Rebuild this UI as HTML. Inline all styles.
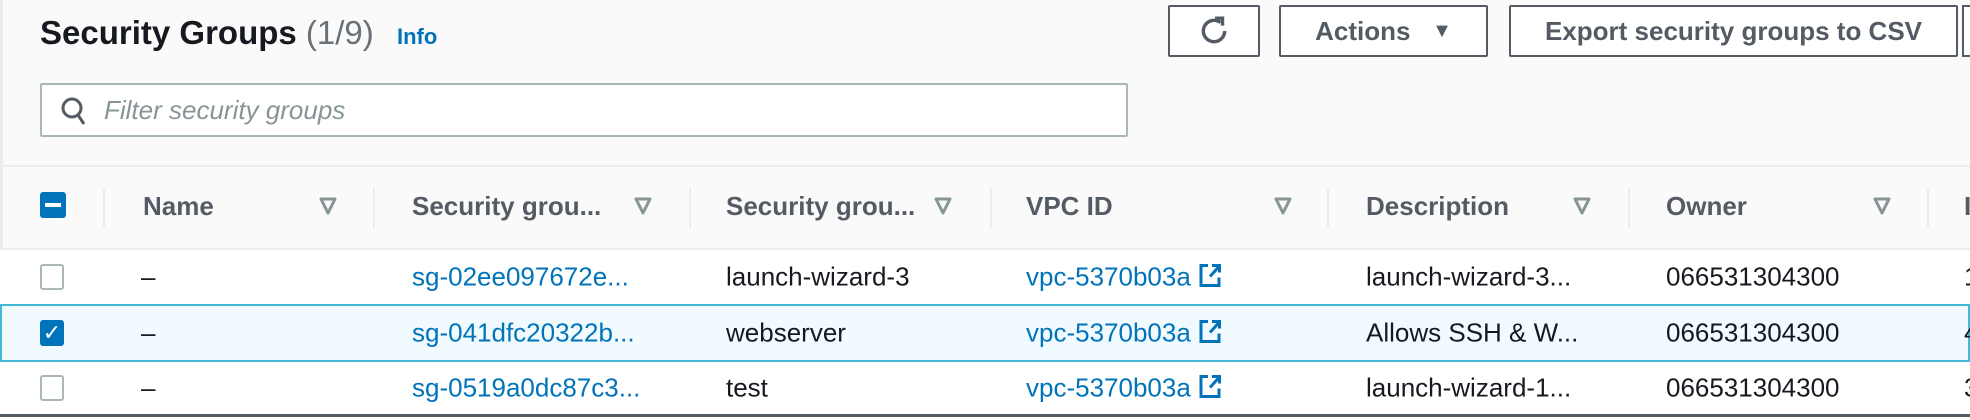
<!DOCTYPE html>
<html><head><style>
body{margin:0;width:1970px;height:420px;background:#fafafa;font-family:"Liberation Sans",sans-serif;position:relative;overflow:hidden;color:#16191f}
.a{position:absolute}
.btn{position:absolute;top:5px;height:52px;border:2px solid #545b64;border-radius:2px;background:#fff;box-sizing:border-box;font-weight:bold;font-size:26px;color:#545b64;display:flex;align-items:center;justify-content:center}
.hd{position:absolute;top:191px;font-weight:bold;font-size:26px;color:#545b64}
.div{position:absolute;top:188px;width:2px;height:40px;background:#eaeded}
.fi{position:absolute;top:197px}
.row{position:absolute;left:0;width:1970px;background:#fff;border-top:2px solid #eaeded;box-sizing:border-box}
.c{position:absolute;font-size:26px;top:50%;transform:translateY(-50%);white-space:nowrap}
.lk{color:#0073bb}
.cb{position:absolute;left:40px;width:24px;height:26px;border:2px solid #aab7b8;border-radius:3px;box-sizing:border-box;top:50%;transform:translateY(-50%);background:#fff}
</style></head><body>
<div class="a" style="left:0;top:0;width:3px;height:420px;background:#eaeded"></div>
<div class="a" style="left:40px;top:14px;font-size:33px;font-weight:bold">Security Groups <span style="font-weight:normal;color:#687078">(1/9)</span></div>
<div class="a" style="left:397px;top:24px;font-size:22px;font-weight:bold;color:#0073bb">Info</div>
<div class="btn" style="left:1168px;width:92px"><svg width="32" height="32" viewBox="0 0 30 30"><path d="M21 7 A10 10 0 1 0 25 15" fill="none" stroke="#545b64" stroke-width="3.2"/><path d="M16 3 L23 3 L23 10" fill="none" stroke="#545b64" stroke-width="3.2"/></svg></div>
<div class="btn" style="left:1279px;width:209px">Actions&nbsp;&nbsp;&nbsp;<span style="font-size:20px">▼</span></div>
<div class="btn" style="left:1509px;width:449px">Export security groups to CSV</div>
<div class="a" style="left:1962px;top:5px;width:8px;height:52px;border:2px solid #545b64;border-right:none;box-sizing:border-box;background:#fff"></div>
<div class="a" style="left:40px;top:83px;width:1088px;height:54px;border:2px solid #aab7b8;border-radius:2px;background:#fff;box-sizing:border-box"></div>
<svg class="a" style="left:60px;top:96px" width="26" height="30" viewBox="0 0 26 30"><circle cx="12" cy="12" r="9" fill="none" stroke="#545b64" stroke-width="3"/><path d="M18 19 L24 28" stroke="#545b64" stroke-width="3"/></svg>
<div class="a" style="left:104px;top:95px;font-size:26px;font-style:italic;color:#879596">Filter security groups</div>
<div class="a" style="left:0;top:165px;width:1970px;height:2px;background:#eaeded"></div>
<div class="a" style="left:40px;top:192px;width:26px;height:26px;background:#0073bb;border-radius:3px"><div style="position:absolute;left:5px;top:11px;width:16px;height:4px;background:#fff"></div></div>
<div class="div" style="left:103px"></div><div class="div" style="left:373px"></div><div class="div" style="left:689px"></div><div class="div" style="left:990px"></div><div class="div" style="left:1327px"></div><div class="div" style="left:1628px"></div><div class="div" style="left:1927px"></div>
<svg width="0" height="0" style="position:absolute"><defs><symbol id="f" viewBox="0 0 18 18"><path d="M2 2 L16 2 L9 16 Z" fill="none" stroke="#879596" stroke-width="3" stroke-linejoin="round"/></symbol><symbol id="e" viewBox="0 0 24 26"><path d="M10 3 H3 V23 H21 V15" fill="none" stroke="#0073bb" stroke-width="3"/><path d="M12 14 L21 4 M14 3 H21.5 V10" fill="none" stroke="#0073bb" stroke-width="3"/></symbol></defs></svg>
<div class="hd" style="left:143px">Name</div><svg class="fi" style="left:319px" width="18" height="18"><use href="#f"/></svg>
<div class="hd" style="left:412px">Security grou...</div><svg class="fi" style="left:634px" width="18" height="18"><use href="#f"/></svg>
<div class="hd" style="left:726px">Security grou...</div><svg class="fi" style="left:934px" width="18" height="18"><use href="#f"/></svg>
<div class="hd" style="left:1026px">VPC ID</div><svg class="fi" style="left:1274px" width="18" height="18"><use href="#f"/></svg>
<div class="hd" style="left:1366px">Description</div><svg class="fi" style="left:1573px" width="18" height="18"><use href="#f"/></svg>
<div class="hd" style="left:1666px">Owner</div><svg class="fi" style="left:1873px" width="18" height="18"><use href="#f"/></svg>
<div class="hd" style="left:1964px">I</div>

<div class="row" style="top:248px;height:56px"><div class="cb"></div><div class="c" style="left:141px">–</div><div class="c lk" style="left:412px">sg-02ee097672e...</div><div class="c" style="left:726px">launch-wizard-3</div><div class="c lk" style="left:1026px">vpc-5370b03a <svg width="24" height="26" style="vertical-align:-3px"><use href="#e"/></svg></div><div class="c" style="left:1366px">launch-wizard-3...</div><div class="c" style="left:1666px">066531304300</div><div class="c" style="left:1964px">1</div></div>
<div class="row" style="top:304px;height:58px;background:#f1faff;border:2px solid #44b9d6"><div class="cb" style="left:38px;background:#0073bb;border-color:#0073bb;color:#fff;font-size:22px;line-height:22px;text-align:center">✓</div><div class="c" style="left:139px">–</div><div class="c lk" style="left:410px">sg-041dfc20322b...</div><div class="c" style="left:724px">webserver</div><div class="c lk" style="left:1024px">vpc-5370b03a <svg width="24" height="26" style="vertical-align:-3px"><use href="#e"/></svg></div><div class="c" style="left:1364px">Allows SSH &amp; W...</div><div class="c" style="left:1664px">066531304300</div><div class="c" style="left:1962px">4</div></div>
<div class="row" style="top:362px;height:52px;border-top:none"><div class="cb"></div><div class="c" style="left:141px">–</div><div class="c lk" style="left:412px">sg-0519a0dc87c3...</div><div class="c" style="left:726px">test</div><div class="c lk" style="left:1026px">vpc-5370b03a <svg width="24" height="26" style="vertical-align:-3px"><use href="#e"/></svg></div><div class="c" style="left:1366px">launch-wizard-1...</div><div class="c" style="left:1666px">066531304300</div><div class="c" style="left:1964px">3</div></div>
<div class="a" style="left:0;top:414px;width:1970px;height:3px;background:#545b64"></div>
<div class="a" style="left:0;top:417px;width:1970px;height:3px;background:#fff"></div>
</body></html>
